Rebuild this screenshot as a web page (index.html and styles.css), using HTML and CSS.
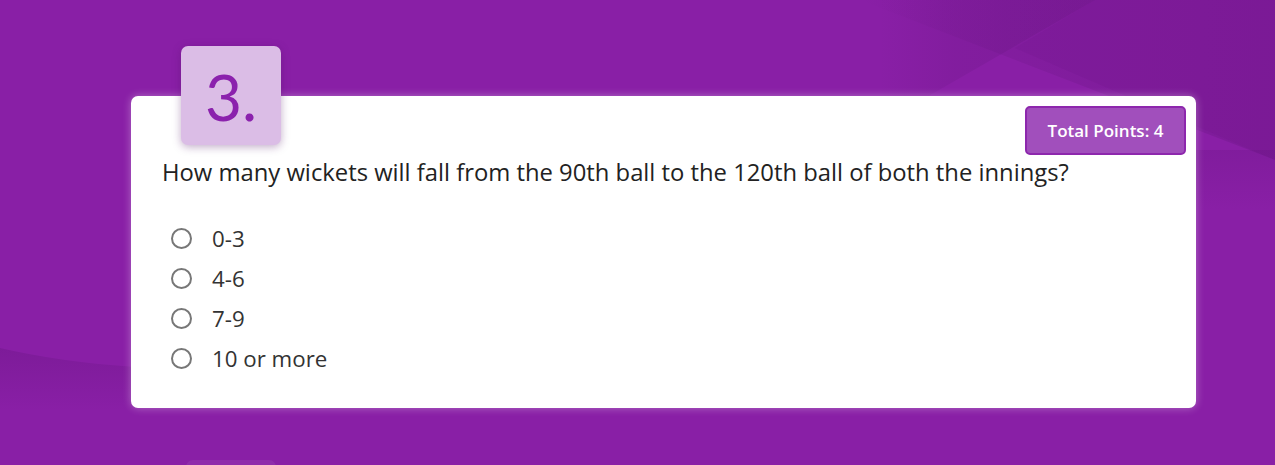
FILE: index.html
```html
<!DOCTYPE html>
<html>
<head>
<meta charset="utf-8">
<link rel="stylesheet" href="styles.css">
</head>
<body>
<svg class="bg" width="1275" height="465" viewBox="0 0 1275 465" aria-hidden="true">
  <defs>
    <linearGradient id="fadeRight" x1="0" y1="0" x2="1" y2="0">
      <stop offset="0" stop-color="#5e1277" stop-opacity="0"/>
      <stop offset="0.35" stop-color="#5e1277" stop-opacity="0.16"/>
      <stop offset="1" stop-color="#5e1277" stop-opacity="0.26"/>
    </linearGradient>
    <linearGradient id="fadeDown" x1="0" y1="0" x2="0" y2="1">
      <stop offset="0" stop-color="#5e1277" stop-opacity="0.28"/>
      <stop offset="1" stop-color="#5e1277" stop-opacity="0"/>
    </linearGradient>
    <linearGradient id="fadeSide" x1="0" y1="0" x2="0" y2="1">
      <stop offset="0" stop-color="#5e1277" stop-opacity="0.2"/>
      <stop offset="1" stop-color="#5e1277" stop-opacity="0"/>
    </linearGradient>
  </defs>
  <polygon points="860,0 1275,0 1275,160" fill="url(#fadeRight)"/>
  <polygon points="880,124 880,0 1095,0" fill="url(#fadeRight)"/>
  <polygon points="1015,48 1275,-108 1275,160" fill="#5e1277" fill-opacity="0.08"/>
  <rect x="1196" y="150" width="79" height="60" fill="url(#fadeSide)"/>
  <path d="M0,348 Q60,362 135,367 L135,410 L0,410 Z" fill="url(#fadeDown)"/>
</svg>
<main class="page">
  <section class="card">
    <div class="num">3.</div>
    <div class="points">Total Points: 4</div>
    <h2 class="question">How many wickets will fall from the 90th ball to the 120th ball of both the innings?</h2>
    <ul class="options">
      <li class="option"><span class="radio"></span><span>0-3</span></li>
      <li class="option"><span class="radio"></span><span>4-6</span></li>
      <li class="option"><span class="radio"></span><span>7-9</span></li>
      <li class="option"><span class="radio"></span><span>10 or more</span></li>
    </ul>
  </section>
  <div class="next-num"></div>
</main>
</body>
</html>
```
FILE: styles.css
```css
html, body {
  margin: 0;
  padding: 0;
  height: 100%;
  overflow: hidden;
}
body {
  background: #891fa6;
  font-family: "Open Sans", "Liberation Sans", sans-serif;
  position: relative;
}
.bg {
  position: absolute;
  left: 0;
  top: 0;
  pointer-events: none;
}
.page {
  position: relative;
  padding: 96px 0 0 131px;
}
.card {
  position: relative;
  width: 1065px;
  height: 312px;
  box-sizing: border-box;
  background: #fff;
  border-radius: 7px;
  box-shadow: 0 0 8px rgba(255, 255, 255, 0.35);
  padding: 60px 0 0 31px;
}
.num {
  position: absolute;
  left: 50px;
  top: -50px;
  width: 100px;
  height: 99px;
  background: #dbbde6;
  border-radius: 7px;
  box-shadow: 0 2px 8px rgba(80, 20, 100, 0.35);
  color: #8b22ad;
  font-family: "Lato", "Open Sans", sans-serif;
  font-size: 64px;
  line-height: 101px;
  text-align: center;
  font-weight: 400;
}
.points {
  position: absolute;
  right: 10px;
  top: 10px;
  width: 161px;
  height: 49px;
  box-sizing: border-box;
  border: 2px solid #8d27ad;
  border-radius: 5px;
  background: #a14fbc;
  color: #fff;
  font-weight: 600;
  font-size: 17px;
  display: flex;
  align-items: center;
  justify-content: center;
}
.question {
  margin: 0;
  font-size: 23.8px;
  font-weight: 400;
  color: #222;
  line-height: 32px;
}
.options {
  list-style: none;
  margin: 0;
  padding: 30px 0 0 9px;
}
.option {
  display: flex;
  align-items: center;
  height: 40px;
  font-size: 22.3px;
  color: #333;
}
.radio {
  width: 17px;
  height: 17px;
  border: 2px solid #777;
  border-radius: 50%;
  margin: 0 20px 0 0;
}
.next-num {
  margin: 52px 0 0 55px;
  width: 90px;
  height: 20px;
  border-radius: 7px 7px 0 0;
  background: rgba(255, 255, 255, 0.06);
}
```
